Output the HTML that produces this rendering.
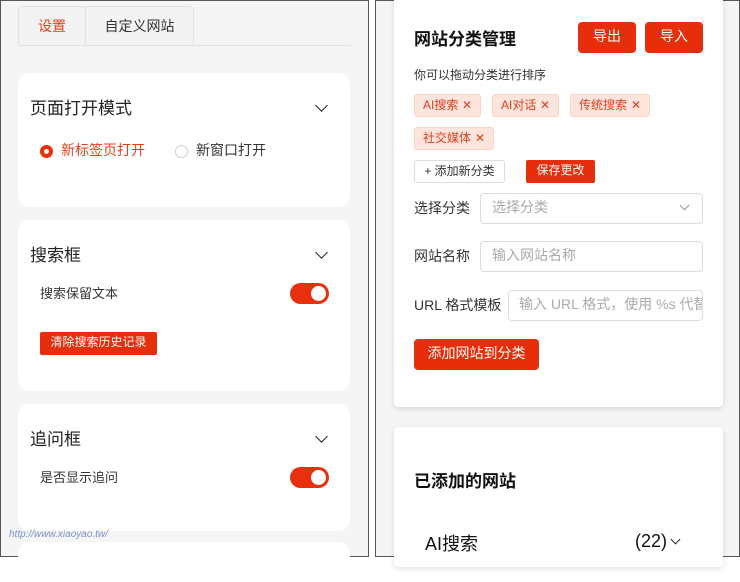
<!DOCTYPE html>
<html><head><meta charset="utf-8"><style>
*{box-sizing:border-box;margin:0;padding:0}
body{width:740px;height:557px;background:#fff;position:relative;overflow:hidden;font-family:"Liberation Sans","Noto Sans CJK SC",sans-serif;color:#222}
.a{position:absolute}
.panel{position:absolute;top:0;height:557px;background:#f5f5f5;border:1px solid #555}
.card{position:absolute;background:#fff;border-radius:12px}
.chev{position:absolute;width:9px;height:9px;border-right:1.6px solid #222;border-bottom:1.6px solid #222;transform:rotate(45deg)}
.tog{position:absolute;width:39px;height:21px;border-radius:11px;background:#e8300e}
.tog::after{content:"";position:absolute;right:3px;top:3px;width:15px;height:15px;border-radius:50%;background:#fff}
.btn{position:absolute;background:#e62e0a;color:#fff;border-radius:4px;text-align:center;font-size:12px}
.tag{position:absolute;height:23px;background:#fde4dd;border:1px solid #fbd2c6;border-radius:3px;color:#e0401c;font-size:12px;line-height:20px;padding-left:8px}
.tag span{position:absolute;right:8px;top:0}
.inp{position:absolute;height:31px;border:1px solid #dcdcdc;border-radius:4px;color:#aaa;font-size:14px;line-height:27px;padding-left:11px;background:#fff;overflow:hidden;white-space:nowrap}
.lbl{position:absolute;font-size:14px;color:#333}
</style></head><body>
<div class="panel" style="left:0;width:369px">
  <div class="a" style="left:17px;top:5px;width:68px;height:40px;border:1px solid #e2e2e2;border-bottom:none;border-radius:4px 4px 0 0;background:#f3f3f3;color:#e0401c;font-size:14px;line-height:38px;text-align:center">设置</div>
  <div class="a" style="left:84px;top:5px;width:109px;height:40px;border:1px solid #e2e2e2;border-bottom:none;border-radius:0 4px 0 0;background:#f3f3f3;color:#333;font-size:14px;line-height:38px;text-align:center">自定义网站</div>
  <div class="a" style="left:17px;top:44px;width:333px;height:1px;background:#e2e2e2"></div>
  <div class="card" style="left:17px;top:72px;width:332px;height:134px">
    <div class="a" style="left:12px;top:21px;font-size:17px">页面打开模式</div>
    <div class="chev" style="left:299px;top:28px"></div>
    <div class="a" style="left:22px;top:72px;width:13px;height:13px;border-radius:50%;border:4px solid #e8300e"></div>
    <div class="a" style="left:43px;top:67px;font-size:14px;color:#e0401c">新标签页打开</div>
    <div class="a" style="left:157px;top:72px;width:13px;height:13px;border-radius:50%;border:1px solid #ccc"></div>
    <div class="a" style="left:178px;top:67px;font-size:14px;color:#333">新窗口打开</div>
  </div>
  <div class="card" style="left:17px;top:219px;width:332px;height:171px">
    <div class="a" style="left:12px;top:21px;font-size:17px">搜索框</div>
    <div class="chev" style="left:299px;top:28px"></div>
    <div class="a" style="left:22px;top:63px;font-size:13px;color:#333">搜索保留文本</div>
    <div class="tog" style="left:272px;top:63px"></div>
    <div class="btn" style="left:22px;top:112px;width:117px;height:23px;line-height:21px;border-radius:2px">清除搜索历史记录</div>
  </div>
  <div class="card" style="left:17px;top:403px;width:332px;height:127px">
    <div class="a" style="left:12px;top:21px;font-size:17px">追问框</div>
    <div class="chev" style="left:299px;top:28px"></div>
    <div class="a" style="left:22px;top:63px;font-size:13px;color:#333">是否显示追问</div>
    <div class="tog" style="left:272px;top:63px"></div>
  </div>
  <div class="card" style="left:17px;top:541px;width:332px;height:40px"></div>
  <div class="a" style="left:8px;top:528px;font-size:10px;color:#7a8fc8;font-style:italic">http://www.xiaoyao.tw/</div>
</div>
<div class="panel" style="left:375px;width:365px">
  <div class="card" style="left:18px;top:-12px;width:329px;height:418px;border-radius:4px;box-shadow:0 2px 6px rgba(0,0,0,.12)">
    <div class="a" style="left:20px;top:36px;font-size:17px;font-weight:bold;color:#111">网站分类管理</div>
    <div class="btn" style="left:184px;top:33px;width:58px;height:31px;line-height:29px;font-size:14px">导出</div>
    <div class="btn" style="left:251px;top:33px;width:58px;height:31px;line-height:29px;font-size:14px">导入</div>
    <div class="a" style="left:20px;top:77px;font-size:12px;color:#333">你可以拖动分类进行排序</div>
    <div class="tag" style="left:20px;top:105px;width:67px">AI搜索<span>✕</span></div>
    <div class="tag" style="left:98px;top:105px;width:67px">AI对话<span>✕</span></div>
    <div class="tag" style="left:176px;top:105px;width:80px">传统搜索<span>✕</span></div>
    <div class="tag" style="left:20px;top:138px;width:80px">社交媒体<span>✕</span></div>
    <div class="a" style="left:20px;top:171px;width:91px;height:23px;border:1px solid #ddd;border-radius:3px;font-size:12px;line-height:20px;text-align:center;color:#333">+ 添加新分类</div>
    <div class="btn" style="left:132px;top:171px;width:69px;height:23px;line-height:21px;border-radius:2px">保存更改</div>
    <div class="lbl" style="left:20px;top:209px">选择分类</div>
    <div class="inp" style="left:86px;top:204px;width:223px">选择分类</div>
    <div class="chev" style="left:287px;top:213px;width:7px;height:7px;border-color:#999;border-width:1.2px"></div>
    <div class="lbl" style="left:20px;top:257px">网站名称</div>
    <div class="inp" style="left:86px;top:252px;width:223px">输入网站名称</div>
    <div class="lbl" style="left:20px;top:306px">URL 格式模板</div>
    <div class="inp" style="left:114px;top:301px;width:195px;padding-left:10px">输入 URL 格式，使用 %s 代替</div>
    <div class="btn" style="left:20px;top:350px;width:125px;height:31px;line-height:29px;font-size:14px">添加网站到分类</div>
  </div>
  <div class="card" style="left:18px;top:426px;width:329px;height:140px;border-radius:4px;box-shadow:0 2px 6px rgba(0,0,0,.12)">
    <div class="a" style="left:20px;top:40px;font-size:17px;font-weight:bold;color:#111">已添加的网站</div>
    <div class="a" style="left:31px;top:103px;font-size:18px;color:#111">AI搜索</div>
    <div class="a" style="left:241px;top:104px;font-size:18px;color:#111">(22)</div>
    <div class="chev" style="left:278px;top:109px;width:7px;height:7px;border-width:1.4px"></div>
  </div>
</div>
</body></html>
